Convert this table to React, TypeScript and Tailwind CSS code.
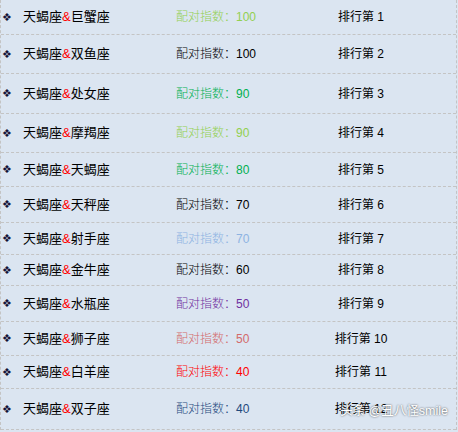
const rows = [
  { name: "巨蟹座", score: 100, color: "text-[#92d050]", h: "h-[35px]" },
  { name: "双鱼座", score: 100, color: "text-black", h: "h-[39px]" },
  { name: "处女座", score: 90, color: "text-[#00b050]", h: "h-[40px]" },
  { name: "摩羯座", score: 90, color: "text-[#92d050]", h: "h-[39px]" },
  { name: "天蝎座", score: 80, color: "text-[#00b050]", h: "h-[34px]" },
  { name: "天秤座", score: 70, color: "text-black", h: "h-[36px]" },
  { name: "射手座", score: 70, color: "text-[#8db3e2]", h: "h-[32px]" },
  { name: "金牛座", score: 60, color: "text-black", h: "h-[31px]" },
  { name: "水瓶座", score: 50, color: "text-[#7030a0]", h: "h-[36px]" },
  { name: "狮子座", score: 50, color: "text-[#d36a6a]", h: "h-[34px]" },
  { name: "白羊座", score: 40, color: "text-[#ff0000]", h: "h-[33px]" },
  { name: "双子座", score: 40, color: "text-[#1f497d]", h: "h-[41px]" },
];

function App() {
  return (
    <div
      className="relative w-[458px] h-[432px] bg-[#dbe5f1] overflow-hidden"
      style={{ fontFamily: '"Liberation Sans", "Noto Sans CJK SC", sans-serif' }}
    >
      <div className="w-[457px] border-l border-r border-dashed border-[#c4c4c4]">
        {rows.map((r, i) => (
          <div
            key={i}
            className={`flex items-center ${r.h} border-b border-dashed border-[#c4c4c4]`}
          >
            <div className="w-[175px] flex items-center pl-[1px]">
              <span
                className="w-[21px] text-[11px] leading-none text-[#141438]"
                style={{ fontFamily: '"DejaVu Sans", sans-serif' }}
              >
                ❖
              </span>
              <span className="text-[13px] text-black">
                天蝎座<span className="text-[#ff0000]">&amp;</span>
                {r.name}
              </span>
            </div>
            <div className={`w-[120px] text-[12px] font-light ${r.color}`}>
              配对指数：{r.score}
            </div>
            <div className="w-[130px] text-center text-[12px] text-black">
              排行第 {i + 1}
            </div>
          </div>
        ))}
      </div>

      {/* watermark */}
      <div
        className="absolute right-[10px] bottom-[11px] text-[12.5px] text-white"
        style={{ textShadow: "0 0 2px rgba(0,0,0,0.75)" }}
      >
        头条 @丑八怪smile
      </div>
    </div>
  );
}

export default App;
